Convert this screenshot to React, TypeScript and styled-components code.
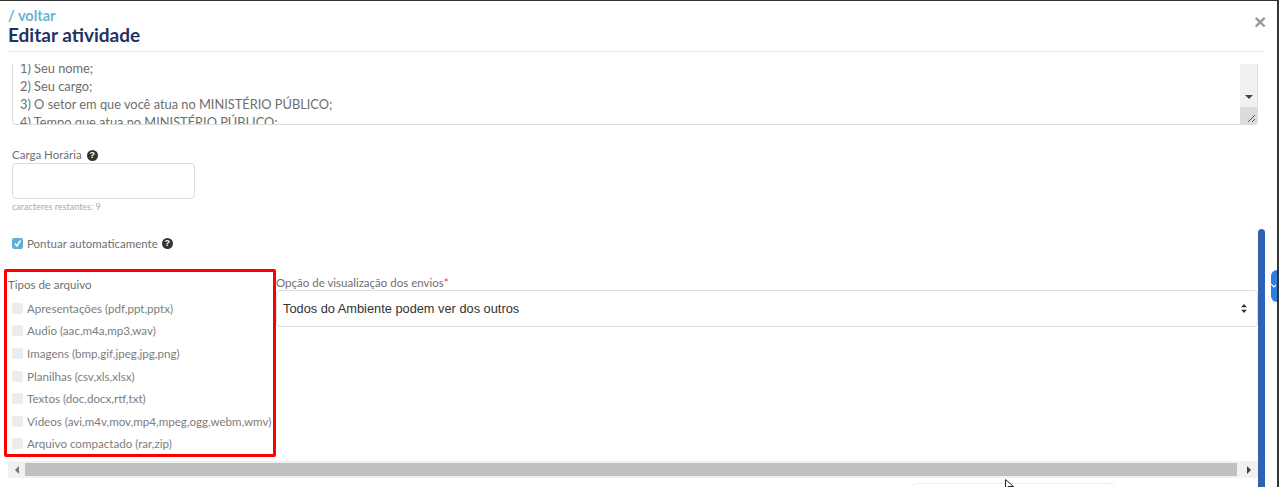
import React from "react";
import styled, { createGlobalStyle } from "styled-components";

const Global = createGlobalStyle`
  html, body { margin: 0; padding: 0; background: #fff; overflow: hidden; }
  body { font-family: "Lato", "Noto Sans", sans-serif; color: #666; }
  * { box-sizing: border-box; }
`;

const Modal = styled.div`
  position: relative;
  width: 1279px;
  height: 487px;
  overflow: hidden;
  background: #fff;
  border-top: 1px solid #333;
  border-right: 2px solid #333;
  display: flex;
  flex-direction: column;
`;
const TopDark = styled.div`
  position: absolute; left: 0; top: -1px; width: 163px; height: 1px; background: #000;
`;
const Header = styled.header`
  margin: 0 12px 0 7px;
  height: 51px;
  padding: 8px 0 0 1px;
  border-bottom: 1px solid #e8e8e8;
  position: relative;
`;
const Back = styled.div`
  font-size: 14.5px; font-weight: 700; line-height: 14px; color: #6db3d4;
`;
const Title = styled.h1`
  margin: 0; font-size: 19px; font-weight: 700; line-height: 23px; color: #1f3460;
`;
const Close = styled.div`
  position: absolute; right: -1px; top: 13px; width: 12px; height: 16px;
  font: 700 21px/16px "Liberation Sans", sans-serif; color: #9a9a9a; text-align: center;
`;
const Description = styled.div`
  position: relative;
  margin: 12px 0 0 12px;
  width: 1246px;
  height: 61px;
  border: 1px solid #ddd;
  border-top: 0;
  border-radius: 0 0 4px 4px;
  overflow: hidden;
  padding: 0 0 0 7px;
  font-size: 12.8px;
  line-height: 18px;
  color: #6e6e6e;
`;
const DescText = styled.div`
  margin-top: -5px;
  white-space: nowrap;
`;
const ScrollTrack = styled.div`
  position: absolute; right: 0; top: 0; width: 17px; height: 43px; background: #f1f1f1;
  display: flex; align-items: flex-end; justify-content: center; padding-bottom: 8px;
`;
const ArrowDown = styled.div`
  width: 0; height: 0; border-left: 4px solid transparent; border-right: 4px solid transparent;
  border-top: 4px solid #444;
`;
const Resizer = styled.div`
  position: absolute; right: 0; bottom: 0; width: 17px; height: 17px; background: #dcdcdc;
`;
const Field = styled.div`
  margin: 23px 0 0 12px;
`;
const Label = styled.label`
  display: flex; align-items: center; gap: 5px; font-size: 11.5px; line-height: 14px; color: #707070;
`;
const Help = styled.span`
  display: inline-flex; align-items: center; justify-content: center;
  width: 11px; height: 11px; border-radius: 50%; background: #333; color: #fff;
  font: 700 9px/11px "Liberation Sans", sans-serif;
`;
const Input = styled.div`
  width: 183px; height: 36px; margin-top: 1px; border: 1px solid #ddd; border-radius: 4px; background: #fff;
`;
const Hint = styled.div`
  margin-top: 2px; font-size: 9px; line-height: 12px; color: #aaa;
`;
const AutoRow = styled.div`
  margin: 22px 0 0 12px; display: flex; align-items: center; gap: 4px; font-size: 11.5px; height: 16px; color: #707070;
`;
const Check = styled.span<{ $on?: boolean }>`
  flex: none;
  width: 11px; height: 11px; border-radius: 2px;
  background: ${(p) => (p.$on ? "#5fafd6" : "#ececec")};
  display: inline-flex; align-items: center; justify-content: center;
`;
const Lower = styled.div`
  margin: 18px 0 0 4px;
  display: flex;
  align-items: flex-start;
  width: 1254px;
`;
const TypesBox = styled.fieldset`
  margin: 0; padding: 6px 0 0 1px;
  width: 272px; height: 188px; flex: none;
  border: 3px solid #f00;
  border-radius: 2px;
`;
const TypesTitle = styled.div`
  font-size: 11.5px; line-height: 14px; color: #707070; margin-bottom: 5px;
`;
const TypeRow = styled.div`
  height: 22.6px; padding-left: 4px; display: flex; align-items: center; gap: 4px;
  font-size: 11.6px; color: #7d7d7d; white-space: nowrap;
`;
const SelectCol = styled.div`
  flex: 1; padding-top: 7px;
`;
const Required = styled.span`
  color: #e33;
`;
const SelectBox = styled.div`
  height: 37px; border: 1px solid #ddd; border-radius: 4px;
  display: flex; align-items: center; justify-content: space-between;
  padding: 0 10px 0 6px; font: 12.8px "Liberation Sans", "Noto Sans", sans-serif; color: #333;
`;
const Updown = styled.svg`
  width: 6px; height: 9px; fill: #333;
`;
const HScroll = styled.div`
  position: absolute; left: 8px; top: 460px; width: 1250px; height: 17px; background: #f1f1f1;
  display: flex; align-items: center; padding: 0 7px; justify-content: space-between;
`;
const HThumb = styled.div`
  position: absolute; left: 17px; top: 2px; width: 1212px; height: 13px; background: #c0c0c0;
`;
const Tri = styled.div<{ $right?: boolean }>`
  width: 0; height: 0; border-top: 4px solid transparent; border-bottom: 4px solid transparent;
  ${(p) => (p.$right ? "border-left: 4px solid #444;" : "border-right: 4px solid #777;")}
`;
const BlueBar = styled.div`
  position: absolute; left: 1258px; top: 228px; width: 7px; height: 270px; background: #2f62b4; border-radius: 4px;
`;
const BlueTab = styled.div`
  position: absolute; left: 1271px; top: 269px; width: 8px; height: 32px; background: #2a7de1; border-radius: 6px 0 0 6px;
  display: flex; align-items: center;
`;
const BottomCard = styled.div`
  position: absolute; left: 910px; top: 482px; width: 207px; height: 20px;
  border: 1px solid #eee; border-radius: 8px;
`;
const Pointer = styled.svg`
  position: absolute; left: 1005px; top: 478px; width: 10px; height: 12px;
`;

const types = [
  "Apresentações (pdf,ppt,pptx)",
  "Audio (aac,m4a,mp3,wav)",
  "Imagens (bmp,gif,jpeg,jpg,png)",
  "Planilhas (csv,xls,xlsx)",
  "Textos (doc,docx,rtf,txt)",
  "Videos (avi,m4v,mov,mp4,mpeg,ogg,webm,wmv)",
  "Arquivo compactado (rar,zip)",
];

export default function App() {
  return (
    <>
      <Global />
      <Modal>
        <TopDark />
        <Header>
          <Back>/ voltar</Back>
          <Title>Editar atividade</Title>
          <Close>×</Close>
        </Header>
        <Description>
          <DescText>
            <div>1) Seu nome;</div>
            <div>2) Seu cargo;</div>
            <div>3) O setor em que você atua no MINISTÉRIO PÚBLICO;</div>
            <div>4) Tempo que atua no MINISTÉRIO PÚBLICO;</div>
          </DescText>
          <ScrollTrack><ArrowDown /></ScrollTrack>
          <Resizer>
            <svg width="17" height="17" viewBox="0 0 17 17">
              <path d="M8 15 L15 8 M12 15 L15 12" stroke="#555" strokeWidth="1" fill="none" />
            </svg>
          </Resizer>
        </Description>
        <Field>
          <Label>Carga Horária <Help>?</Help></Label>
          <Input />
          <Hint>caracteres restantes: 9</Hint>
        </Field>
        <AutoRow>
          <Check $on>
            <svg width="9" height="9" viewBox="0 0 9 9">
              <path d="M2 4.5 L4 7 L7.5 1.5" stroke="#fff" strokeWidth="1.5" fill="none" />
            </svg>
          </Check>
          Pontuar automaticamente <Help>?</Help>
        </AutoRow>
        <Lower>
          <TypesBox>
            <TypesTitle>Tipos de arquivo</TypesTitle>
            {types.map((t) => (
              <TypeRow key={t}><Check />{t}</TypeRow>
            ))}
          </TypesBox>
          <SelectCol>
            <Label as="div">
              <span>Opção de visualização dos envios<Required>*</Required></span>
            </Label>
            <SelectBox>
              Todos do Ambiente podem ver dos outros
              <Updown viewBox="0 0 7 11"><path d="M3.5 0 L7 4 H0 Z M0 7 H7 L3.5 11 Z" /></Updown>
            </SelectBox>
          </SelectCol>
        </Lower>
        <HScroll>
          <Tri />
          <HThumb />
          <Tri $right />
        </HScroll>
        <BlueBar />
        <BlueTab>
          <svg width="5" height="6" viewBox="0 0 5 6">
            <path d="M0 1 L3 4 L6 1" stroke="#fff" strokeWidth="1.2" fill="none" />
          </svg>
        </BlueTab>
        <BottomCard />
        <Pointer viewBox="0 0 10 12">
          <path d="M0.5 0.5 V10 L3 7.5 L8.5 7.5 Z" fill="#fff" stroke="#222" strokeWidth="1" />
        </Pointer>
      </Modal>
    </>
  );
}
